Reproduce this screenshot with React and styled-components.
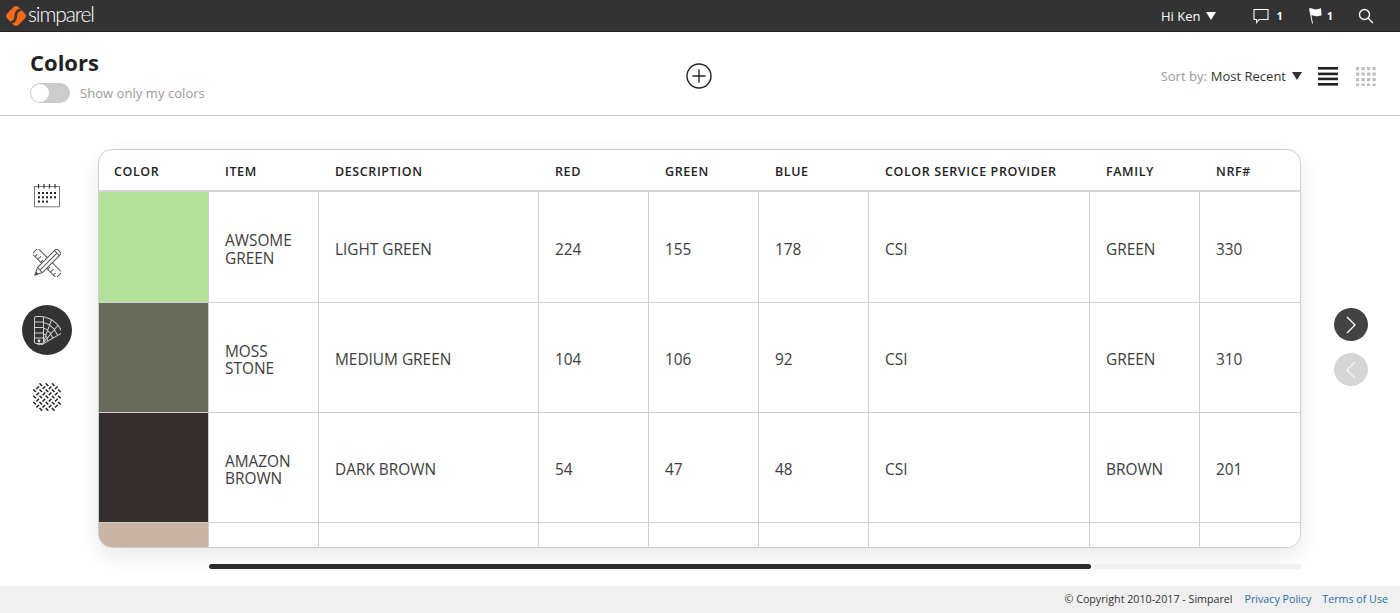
import React from "react";
import styled, { createGlobalStyle } from "styled-components";

const Global = createGlobalStyle`
  html, body { margin: 0; padding: 0; background: #fff; }
  body { font-family: "Open Sans", "Liberation Sans", sans-serif; color: #333; }
  * { box-sizing: border-box; }
`;

const Page = styled.div`
  display: flex;
  flex-direction: column;
  width: 1400px;
  height: 613px;
  overflow: hidden;
`;

/* top bar */
const TopBar = styled.header`
  flex: 0 0 32px;
  display: flex;
  align-items: center;
  justify-content: space-between;
  padding: 0 26px 0 5px;
  background: #333;
  border-bottom: 1px solid #222;
  color: #fff;
`;
const Brand = styled.div`
  display: flex;
  align-items: center;
  gap: 1px;
`;
const BrandName = styled.span`
  font-family: "Lato", sans-serif;
  font-weight: 300;
  font-size: 21px;
  line-height: 28px;
  letter-spacing: -1.1px;
  color: #fff;
  transform: translateY(-2px);
`;
const TopTools = styled.div`
  display: flex;
  align-items: center;
`;
const UserMenu = styled.span`
  display: flex;
  align-items: center;
  gap: 6px;
  margin-right: 37px;
  font-size: 13px;
`;
const Caret = styled.span`
  display: inline-block;
  width: 0;
  height: 0;
  border-left: 5px solid transparent;
  border-right: 5px solid transparent;
  border-top: 8px solid ${(p) => p.$color || "#fff"};
`;
const Notice = styled.span`
  display: flex;
  align-items: center;
  gap: ${(p) => p.$gap || 9}px;
  margin-right: ${(p) => p.$mr || 0}px;
  font-size: 11px;
  font-weight: 700;
`;

/* header */
const PageHead = styled.section`
  flex: 0 0 84px;
  display: grid;
  grid-template-columns: 656px 26px 1fr;
  align-items: center;
  padding: 0 24px 0 30px;
  background: #fff;
  border-bottom: 1px solid #cfcfcf;
`;
const TitleBlock = styled.div`
  display: flex;
  flex-direction: column;
  gap: 6px;
  padding-top: 3px;
`;
const Title = styled.h1`
  margin: 0;
  font-size: 22px;
  line-height: 30px;
  font-weight: 700;
  color: #222;
`;
const ToggleRow = styled.label`
  display: flex;
  align-items: center;
  gap: 10px;
  font-size: 13px;
  letter-spacing: 0.05px;
  color: #999;
`;
const ToggleTrack = styled.span`
  position: relative;
  width: 40px;
  height: 20px;
  border-radius: 10px;
  background: #ccc;
`;
const ToggleKnob = styled.span`
  position: absolute;
  left: 1px;
  top: 1px;
  width: 18px;
  height: 18px;
  border-radius: 50%;
  background: #fff;
`;
const AddButton = styled.button`
  display: flex;
  padding: 0;
  margin-top: 5px;
  border: 0;
  background: none;
`;
const SortBlock = styled.div`
  display: flex;
  align-items: center;
  justify-content: flex-end;
  font-size: 13px;
  margin-top: 5px;
`;
const SortLabel = styled.span`
  color: #999;
  margin-right: 4px;
`;
const SortValue = styled.span`
  color: #333;
  margin-right: 6px;
`;
const ViewIcon = styled.span`
  display: flex;
  margin-left: ${(p) => p.$ml}px;
`;

/* main */
const Main = styled.main`
  flex: 1;
  display: grid;
  grid-template-columns: 98px 1203px 99px;
  min-height: 0;
`;
const SideNav = styled.nav`
  display: flex;
  flex-direction: column;
  align-items: center;
  gap: 17px;
  padding: 55px 4px 0 0;
`;
const SideItem = styled.span`
  display: flex;
  align-items: center;
  justify-content: center;
  width: 50px;
  height: 50px;
  border-radius: 50%;
  background: ${(p) => (p.$active ? "#333" : "transparent")};
  color: ${(p) => (p.$active ? "#e8e8e8" : "#333")};
`;
const Center = styled.div`
  display: flex;
  flex-direction: column;
  padding-top: 33px;
`;
const Card = styled.div`
  height: 399px;
  border: 1px solid #cfcfcf;
  border-radius: 14px;
  overflow: hidden;
  background: #fff;
  box-shadow: 0 8px 22px rgba(0, 0, 0, 0.09);
`;
const Table = styled.table`
  width: 1201px;
  table-layout: fixed;
  border-collapse: separate;
  border-spacing: 0;
`;
const Th = styled.th`
  height: 42px;
  padding: 3px 0 0 16px;
  text-align: left;
  font-size: 12.5px;
  font-weight: 600;
  letter-spacing: 0.6px;
  color: #222;
  border-bottom: 2px solid #d4d4d4;
  white-space: nowrap;

  &:first-child {
    padding-left: 15px;
  }
`;
const Td = styled.td`
  height: ${(p) => p.$h}px;
  padding: 5px 12px 0 16px;
  font-size: 15.4px;
  line-height: 17.5px;
  color: #3d3d3d;
  background: ${(p) => p.$swatch || "#fff"};
  border-bottom: 1px solid #d0d0d0;
  border-right: ${(p) => (p.$last ? "0" : "1px solid #d0d0d0")};
  vertical-align: middle;
`;
const ScrollRow = styled.div`
  display: flex;
  gap: 3px;
  height: 5px;
  margin: 16px 0 0 111px;
`;
const ScrollThumb = styled.span`
  flex: 0 0 882px;
  background: #2b2b2b;
  border-radius: 3px;
`;
const ScrollTrack = styled.span`
  flex: 1;
  background: #f1f1f1;
`;
const Pager = styled.div`
  display: flex;
  flex-direction: column;
  gap: 12px;
  padding: 192px 0 0 33px;
`;
const PagerButton = styled.button`
  display: flex;
  align-items: center;
  justify-content: center;
  width: 34px;
  height: 33px;
  padding: 0;
  border: 0;
  border-radius: 50%;
  background: ${(p) => (p.$off ? "#d6d6d6" : "#434343")};
`;

/* footer */
const Footer = styled.footer`
  flex: 0 0 27px;
  display: flex;
  align-items: center;
  justify-content: flex-end;
  gap: 11px;
  padding: 0 12px 1px 0;
  background: #f0f0f0;
  font-size: 10.7px;
  color: #333;
`;
const Copy = styled.span`
  margin-right: 1px;
`;
const FootLink = styled.a`
  color: #2c6da8;
  text-decoration: none;
`;

/* drawings */
const LogoMark = () => (
  <svg width="22" height="22" viewBox="0 0 22 22">
    <rect x="3" y="3" width="16" height="16" rx="3.8" fill="#f26a1e" transform="rotate(45 11 11)" />
    <path d="M15 5 C11.6 5.4 11 8 10.8 11 C10.6 14 10 16.8 7 17.1" fill="none" stroke="#333" strokeWidth="2.6" strokeLinecap="round" />
  </svg>
);
const Chat = () => (
  <svg width="16" height="16" viewBox="0 0 16 16" fill="none" stroke="#fff" strokeWidth="1.1">
    <path d="M1 1.5h14v10H6.2L3.6 14.5v-3H1z" />
  </svg>
);
const Flag = () => (
  <svg width="15" height="17" viewBox="0 0 15 17" fill="#fff">
    <path d="M1 1.6c3-1.2 4.2.8 6.4.8 2 0 4-.8 5.6-1.2l.6 7c-2 .5-3.6 1.1-5.6 1.1-1.8 0-2.8-1.3-4.6-.9L5 16.4l-1 .2z" />
  </svg>
);
const Search = () => (
  <svg width="16" height="16" viewBox="0 0 16 16" fill="none" stroke="#fff" strokeWidth="1.3">
    <circle cx="6.5" cy="6.5" r="5" />
    <path d="M10.2 10.2L15 15" />
  </svg>
);
const Plus = () => (
  <svg width="26" height="26" viewBox="0 0 26 26" fill="none" stroke="#222" strokeWidth="1.4">
    <circle cx="13" cy="13" r="12" />
    <path d="M13 6.5v13M6.5 13h13" />
  </svg>
);
const ListView = () => (
  <svg width="20" height="20" viewBox="0 0 20 20" fill="#222">
    <rect y="1" width="20" height="2.6" />
    <rect y="6.6" width="20" height="2.6" />
    <rect y="11.6" width="20" height="2.6" />
    <rect y="17" width="20" height="2.6" />
  </svg>
);
const GridView = () => (
  <svg width="20" height="20" viewBox="0 0 20 20" fill="#bdbdbd">
    {[0, 1, 2, 3].flatMap((r) =>
      [0, 1, 2, 3].map((c) => <rect key={`${r}-${c}`} x={c * 5.5} y={r * 5.5 + 1} width="3.2" height="3.2" />)
    )}
  </svg>
);
const Calendar = () => (
  <svg width="28" height="24" viewBox="0 0 28 24" fill="none" stroke="#777">
    <rect x="1.5" y="2.5" width="25" height="20" strokeWidth="1" />
    <path d="M1.5 22.8h25" stroke="#aaa" strokeWidth="1.4" />
    <path d="M5.5 0v4.5M11 0v4.5M16.5 0v4.5M22 0v4.5" stroke="#333" strokeWidth="1.2" />
    <g fill="#222" stroke="none">
      {[0, 1, 2].flatMap((r) =>
        [0, 1, 2, 3, 4].filter((c) => r < 2 || c < 3).map((c) => (
          <rect key={`${r}${c}`} x={5 + c * 4} y={8 + r * 4.3} width="2" height="2" />
        ))
      )}
    </g>
  </svg>
);
const Tools = () => (
  <svg width="28" height="28" viewBox="0 0 28 28" fill="none" stroke="#555" strokeWidth="1" strokeLinejoin="round">
    <g transform="rotate(-45 14 14)">
      <rect x="10" y="-3" width="8" height="34" fill="#fff" />
      <path d="M10 1h3M10 5h4.5M10 9h3M10 19h3M10 23h4.5M10 27h3" />
    </g>
    <g transform="rotate(45 14 14)">
      <path d="M10.5 -3h7V24l-3.5 7-3.5-7z" fill="#fff" />
      <path d="M10.5 24h7M14 0V24M10.5 0h7" />
      <path d="M14 31l-1.4-2.8h2.8z" fill="#444" />
    </g>
  </svg>
);
const Fan = () => (
  <svg width="28" height="30" viewBox="0 0 28 30" fill="none" stroke="#cfcfcf" strokeWidth="1">
    {[60, 40, 20, 0].map((a) => (
      <g key={a} transform={`rotate(${a} 6 26)`}>
        <rect x="1.5" y="1.5" width="9" height="27" rx="1.5" fill="#333" />
        <path d="M1.5 7h9M1.5 12.5h9M1.5 18h9M1.5 23h9" />
      </g>
    ))}
    <circle cx="6" cy="26" r="1.4" fill="#e8e8e8" stroke="none" />
  </svg>
);
const Weave = () => {
  const marks = [];
  for (let r = -3; r <= 3; r++) {
    for (let c = -3; c <= 3; c++) {
      if (Math.abs(r) + Math.abs(c) > 4) continue;
      const x = 14 + (c - r) * 3.1;
      const y = 14 + (c + r) * 3.1;
      marks.push(
        (r + c) % 2 === 0 ? (
          <path key={`${r},${c}`} d={`M${x - 1.3} ${y - 1.3}L${x + 1.3} ${y + 1.3}`} />
        ) : (
          <path key={`${r},${c}`} d={`M${x - 1.3} ${y + 1.3}L${x + 1.3} ${y - 1.3}`} />
        )
      );
    }
  }
  return (
    <svg width="28" height="28" viewBox="0 0 28 28" fill="none" stroke="#1a1a1a" strokeWidth="1.4">
      {marks}
    </svg>
  );
};
const Chevron = ({ left, color }) => (
  <svg width="12" height="18" viewBox="0 0 12 18" fill="none" stroke={color} strokeWidth="1.3">
    <path d={left ? "M10 1L2 9l8 8" : "M2 1l8 8-8 8"} />
  </svg>
);

const columns = [
  ["COLOR", 110],
  ["ITEM", 110],
  ["DESCRIPTION", 220],
  ["RED", 110],
  ["GREEN", 110],
  ["BLUE", 110],
  ["COLOR SERVICE PROVIDER", 221],
  ["FAMILY", 110],
  ["NRF#", 100],
];

const rows = [
  { h: 111, swatch: "#b3e09a", cells: ["AWSOME GREEN", "LIGHT GREEN", "224", "155", "178", "CSI", "GREEN", "330"] },
  { h: 110, swatch: "#686a5c", cells: ["MOSS STONE", "MEDIUM GREEN", "104", "106", "92", "CSI", "GREEN", "310"] },
  { h: 110, swatch: "#362f30", cells: ["AMAZON BROWN", "DARK BROWN", "54", "47", "48", "CSI", "BROWN", "201"] },
  { h: 110, swatch: "#c9b5a6", cells: ["", "", "", "", "", "", "", ""] },
];

export default function App() {
  return (
    <Page>
      <Global />
      <TopBar>
        <Brand>
          <LogoMark />
          <BrandName>simparel</BrandName>
        </Brand>
        <TopTools>
          <UserMenu>
            Hi Ken <Caret />
          </UserMenu>
          <Notice $mr={25} $gap={7}>
            <Chat /> 1
          </Notice>
          <Notice $mr={25} $gap={4}>
            <Flag /> 1
          </Notice>
          <Search />
        </TopTools>
      </TopBar>

      <PageHead>
        <TitleBlock>
          <Title>Colors</Title>
          <ToggleRow>
            <ToggleTrack>
              <ToggleKnob />
            </ToggleTrack>
            Show only my colors
          </ToggleRow>
        </TitleBlock>
        <AddButton aria-label="Add color">
          <Plus />
        </AddButton>
        <SortBlock>
          <SortLabel>Sort by:</SortLabel>
          <SortValue>Most Recent</SortValue>
          <Caret $color="#333" />
          <ViewIcon $ml={16}>
            <ListView />
          </ViewIcon>
          <ViewIcon $ml={18}>
            <GridView />
          </ViewIcon>
        </SortBlock>
      </PageHead>

      <Main>
        <SideNav>
          <SideItem><Calendar /></SideItem>
          <SideItem><Tools /></SideItem>
          <SideItem $active><Fan /></SideItem>
          <SideItem><Weave /></SideItem>
        </SideNav>

        <Center>
          <Card>
            <Table>
              <colgroup>
                {columns.map(([name, width]) => (
                  <col key={name} width={width} />
                ))}
              </colgroup>
              <thead>
                <tr>
                  {columns.map(([name]) => (
                    <Th key={name}>{name}</Th>
                  ))}
                </tr>
              </thead>
              <tbody>
                {rows.map((row) => (
                  <tr key={row.swatch}>
                    <Td $h={row.h} $swatch={row.swatch} />
                    {row.cells.map((cell, i) => (
                      <Td key={i} $h={row.h} $last={i === row.cells.length - 1}>
                        {cell}
                      </Td>
                    ))}
                  </tr>
                ))}
              </tbody>
            </Table>
          </Card>
          <ScrollRow>
            <ScrollThumb />
            <ScrollTrack />
          </ScrollRow>
        </Center>

        <Pager>
          <PagerButton aria-label="Next">
            <Chevron color="#fff" />
          </PagerButton>
          <PagerButton $off aria-label="Previous">
            <Chevron left color="#f4f4f4" />
          </PagerButton>
        </Pager>
      </Main>

      <Footer>
        <Copy>© Copyright 2010-2017 - Simparel</Copy>
        <FootLink href="#">Privacy Policy</FootLink>
        <FootLink href="#">Terms of Use</FootLink>
      </Footer>
    </Page>
  );
}
